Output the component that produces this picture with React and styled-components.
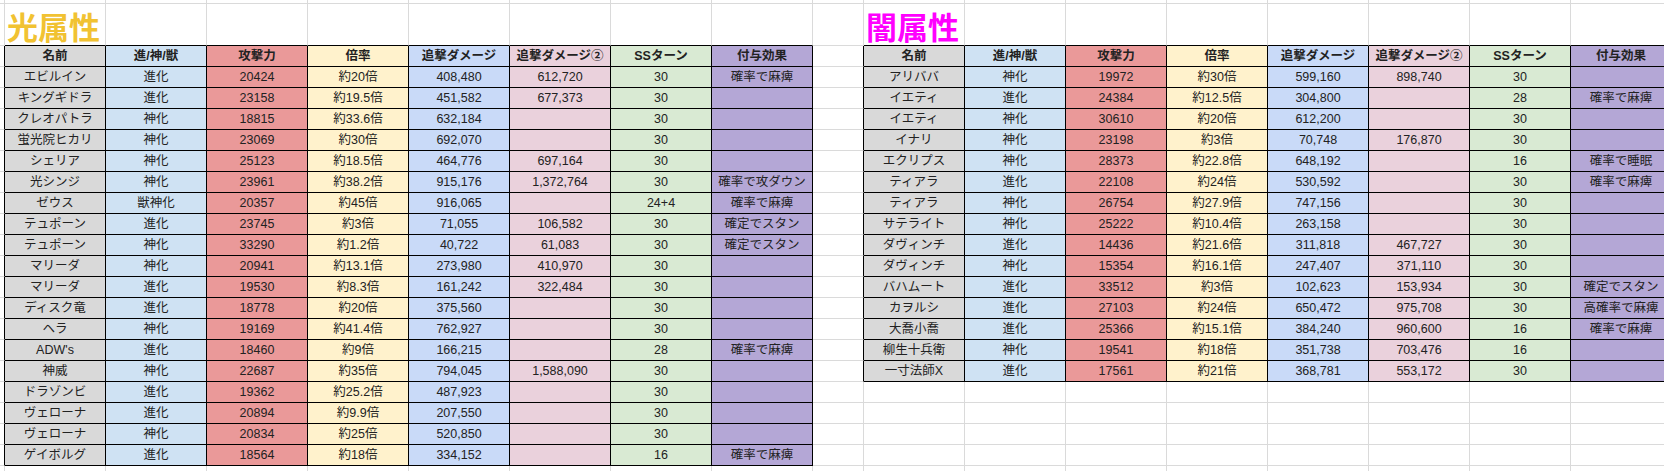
import React from 'react';
import styled, { createGlobalStyle } from 'styled-components';

const GlobalStyle = createGlobalStyle`
    html, body {
        margin: 0;
        padding: 0;
        background: #ffffff;
        overflow: hidden;
    }
`;

const GRID = '#dadada';
const INK = '#000000';

// column colours, same order for both tables
const COLORS = ['#d9d9d9', '#cfe2f3', '#ea9999', '#fff2cc', '#c9daf8', '#ead1dc', '#d9ead3', '#b4a7d6'];
const HEADERS = ['名前', '進/神/獣', '攻撃力', '倍率', '追撃ダメージ', '追撃ダメージ②', 'SSターン', '付与効果'];

const lightRows = [
    ['エビルイン', '進化', '20424', '約20倍', '408,480', '612,720', '30', '確率で麻痺'],
    ['キングギドラ', '進化', '23158', '約19.5倍', '451,582', '677,373', '30', ''],
    ['クレオパトラ', '神化', '18815', '約33.6倍', '632,184', '', '30', ''],
    ['蛍光院ヒカリ', '神化', '23069', '約30倍', '692,070', '', '30', ''],
    ['シェリア', '神化', '25123', '約18.5倍', '464,776', '697,164', '30', ''],
    ['光シンジ', '神化', '23961', '約38.2倍', '915,176', '1,372,764', '30', '確率で攻ダウン'],
    ['ゼウス', '獣神化', '20357', '約45倍', '916,065', '', '24+4', '確率で麻痺'],
    ['テュポーン', '進化', '23745', '約3倍', '71,055', '106,582', '30', '確定でスタン'],
    ['テュポーン', '神化', '33290', '約1.2倍', '40,722', '61,083', '30', '確定でスタン'],
    ['マリーダ', '神化', '20941', '約13.1倍', '273,980', '410,970', '30', ''],
    ['マリーダ', '進化', '19530', '約8.3倍', '161,242', '322,484', '30', ''],
    ['ディスク竜', '進化', '18778', '約20倍', '375,560', '', '30', ''],
    ['ヘラ', '神化', '19169', '約41.4倍', '762,927', '', '30', ''],
    ["ADW's", '進化', '18460', '約9倍', '166,215', '', '28', '確率で麻痺'],
    ['神威', '神化', '22687', '約35倍', '794,045', '1,588,090', '30', ''],
    ['ドラゾンビ', '進化', '19362', '約25.2倍', '487,923', '', '30', ''],
    ['ヴェローナ', '進化', '20894', '約9.9倍', '207,550', '', '30', ''],
    ['ヴェローナ', '神化', '20834', '約25倍', '520,850', '', '30', ''],
    ['ゲイボルグ', '進化', '18564', '約18倍', '334,152', '', '16', '確率で麻痺'],
];

const darkRows = [
    ['アリババ', '神化', '19972', '約30倍', '599,160', '898,740', '30', ''],
    ['イエティ', '進化', '24384', '約12.5倍', '304,800', '', '28', '確率で麻痺'],
    ['イエティ', '神化', '30610', '約20倍', '612,200', '', '30', ''],
    ['イナリ', '神化', '23198', '約3倍', '70,748', '176,870', '30', ''],
    ['エクリプス', '神化', '28373', '約22.8倍', '648,192', '', '16', '確率で睡眠'],
    ['ティアラ', '進化', '22108', '約24倍', '530,592', '', '30', '確率で麻痺'],
    ['ティアラ', '神化', '26754', '約27.9倍', '747,156', '', '30', ''],
    ['サテライト', '神化', '25222', '約10.4倍', '263,158', '', '30', ''],
    ['ダヴィンチ', '進化', '14436', '約21.6倍', '311,818', '467,727', '30', ''],
    ['ダヴィンチ', '神化', '15354', '約16.1倍', '247,407', '371,110', '30', ''],
    ['バハムート', '進化', '33512', '約3倍', '102,623', '153,934', '30', '確定でスタン'],
    ['カヲルシ', '進化', '27103', '約24倍', '650,472', '975,708', '30', '高確率で麻痺'],
    ['大喬小喬', '進化', '25366', '約15.1倍', '384,240', '960,600', '16', '確率で麻痺'],
    ['柳生十兵衛', '神化', '19541', '約18倍', '351,738', '703,476', '16', ''],
    ['一寸法師X', '進化', '17561', '約21倍', '368,781', '553,172', '30', ''],
];

// where each table sits on the sheet (grid row / column index)
const TABLES = [
    { col: 1, row: 2, rows: lightRows, title: '光属性', titleColor: '#f1c232' },
    { col: 10, row: 2, rows: darkRows, title: '闇属性', titleColor: '#ff00ff' },
];

const COLS = 18;
const ROWS = 23;

const Styled = {
    sheet: styled.div`
        display: grid;
        grid-template-columns: 5px repeat(8, 101px) 51px repeat(8, 101px);
        grid-template-rows: 4px 42px repeat(21, 21px);
        width: 1664px;
        height: 471px;
        overflow: hidden;
        background: #ffffff;
    `,
    cell: styled.div`
        box-sizing: border-box;
        display: flex;
        align-items: center;
        justify-content: center;
        overflow: hidden;
        white-space: nowrap;
        background: ${p => p.$bg || 'transparent'};
        border-right: 1px solid ${p => p.$right};
        border-bottom: 1px solid ${p => p.$bottom};
        font-family: "Liberation Sans", "Noto Sans CJK JP", sans-serif;
        font-size: 12.5px;
        font-weight: ${p => (p.$bold ? 700 : 400)};
        color: #222222;
        line-height: 1;
    `,
    title: styled.span`
        padding-left: 2px;
        margin-top: 1px;
        font-family: "Noto Sans CJK JP", sans-serif;
        font-size: 31px;
        font-weight: 700;
        line-height: 1;
        color: ${p => p.$color};
    `,
};

const TitleCell = styled(Styled.cell)`
    justify-content: flex-start;
    overflow: visible;
`;

function tableAt(r, c) {
    for (const t of TABLES) {
        const inRows = r >= t.row && r <= t.row + t.rows.length;
        const inCols = c >= t.col && c < t.col + 8;
        if (inRows && inCols) return t;
    }
    return null;
}

function titleAt(r, c) {
    return TABLES.find(t => t.row - 1 === r && t.col === c);
}

function App() {
    const cells = [];

    for (let r = 0; r < ROWS; r++) {
        for (let c = 0; c < COLS; c++) {
            const t = tableAt(r, c);
            const right = t || tableAt(r, c + 1) ? INK : GRID;
            const bottom = t || tableAt(r + 1, c) ? INK : GRID;
            const key = `${r}-${c}`;
            const title = titleAt(r, c);

            if (title) {
                cells.push(
                    <TitleCell key={key} $right={right} $bottom={bottom}>
                        <Styled.title $color={title.titleColor}>{title.title}</Styled.title>
                    </TitleCell>
                );
                continue;
            }

            if (!t) {
                cells.push(<Styled.cell key={key} $right={right} $bottom={bottom} />);
                continue;
            }

            const i = c - t.col;
            const isHead = r === t.row;
            const text = isHead ? HEADERS[i] : t.rows[r - t.row - 1][i];

            cells.push(
                <Styled.cell key={key} $bg={COLORS[i]} $bold={isHead} $right={right} $bottom={bottom}>
                    {text}
                </Styled.cell>
            );
        }
    }

    return (
        <React.Fragment>
            <GlobalStyle />
            <Styled.sheet>{cells}</Styled.sheet>
        </React.Fragment>
    );
}

export default App;
